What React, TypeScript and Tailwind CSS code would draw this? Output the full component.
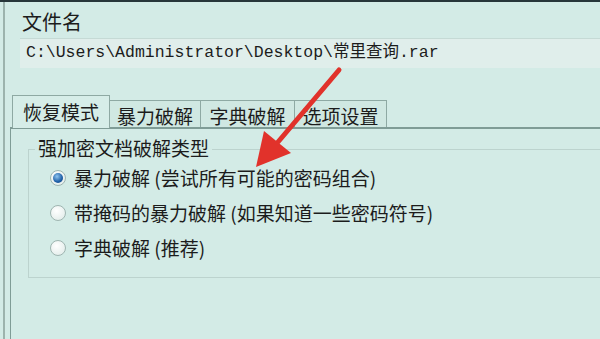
const CJK = "font-['Noto_Sans_CJK_SC','Noto_Sans',sans-serif]";

function Radio({ checked }: { checked?: boolean }) {
  return (
    <span className="flex h-[16px] w-[16px] shrink-0 items-center justify-center rounded-full border border-[#9fb5b1] bg-[radial-gradient(circle_at_40%_35%,#ffffff,#dde9e6)]">
      {checked && (
        <span className="h-[10px] w-[10px] rounded-full bg-[radial-gradient(circle_at_40%_35%,#8fc4ef,#1d5ea6_60%,#123e75)]" />
      )}
    </span>
  );
}

const TABS = [
  { label: "恢复模式", w: "w-[98px]", active: true },
  { label: "暴力破解", w: "w-[92px]" },
  { label: "字典破解", w: "w-[95px]" },
  { label: "选项设置", w: "w-[93px]" },
];

const OPTIONS = [
  { text: "暴力破解 (尝试所有可能的密码组合)", checked: true },
  { text: "带掩码的暴力破解 (如果知道一些密码符号)" },
  { text: "字典破解 (推荐)" },
];

export default function App() {
  return (
    <div className={`relative h-[339px] w-[600px] overflow-hidden border-t-2 border-[#27363a] bg-[#d3ebe6] text-[#1c1c1c] ${CJK}`}>
      <div className="ml-[3px] flex h-full flex-col border-l-2 border-[#9cb3ad]">
        <div className="pl-[17px] pt-[8px] text-[20px] leading-[24px]">文件名</div>
        <div className="ml-[15px] mt-[4px] flex h-[30px] items-center border-t border-[#c5dad5] bg-[#e0eeeb] pl-[6px] font-['Liberation_Mono','Noto_Sans_CJK_SC',monospace] text-[16.5px]">
          C:\Users\Administrator\Desktop\常里查询.rar
        </div>

        <div className="mt-[28px] flex h-[32px] items-end pl-[7px]">
          {TABS.map((t) => (
            <div
              key={t.label}
              className={`${t.w} flex items-center justify-center border border-b-0 border-[#8ea9a3] text-[19px] leading-none ${
                t.active ? "z-10 h-[33px] bg-[#d6ede8] pb-[2px]" : "-ml-px h-[28px] bg-[#d0e8e2] pt-[1px]"
              }`}
            >
              {t.label}
            </div>
          ))}
        </div>

        <div className="-mt-px ml-[5px] flex-1 border-l border-t-2 border-[#7f9c96] pl-[17px] pt-[20px]">
          <div className="relative h-[129px] border border-r-0 border-[#bcd3ce]">
            <div className="absolute -top-[14px] left-[6px] bg-[#d3ebe6] px-[3px] text-[19px] leading-[24px]">
              强加密文档破解类型
            </div>
            <div className="flex flex-col gap-[11px] pl-[21px] pt-[16px]">
              {OPTIONS.map((o) => (
                <div key={o.text} className="flex h-[24px] items-center gap-[8px] text-[19px] leading-[24px]">
                  <Radio checked={o.checked} />
                  <span>{o.text}</span>
                </div>
              ))}
            </div>
          </div>
        </div>
      </div>

      <svg className="pointer-events-none absolute left-0 top-0" width="600" height="339" viewBox="0 0 600 339">
        <line x1="339" y1="68" x2="278" y2="140" stroke="#e1322b" strokeWidth="5" strokeLinecap="round" />
        <polygon points="256,165 264,129 291,151" fill="#e1322b" />
      </svg>
    </div>
  );
}
